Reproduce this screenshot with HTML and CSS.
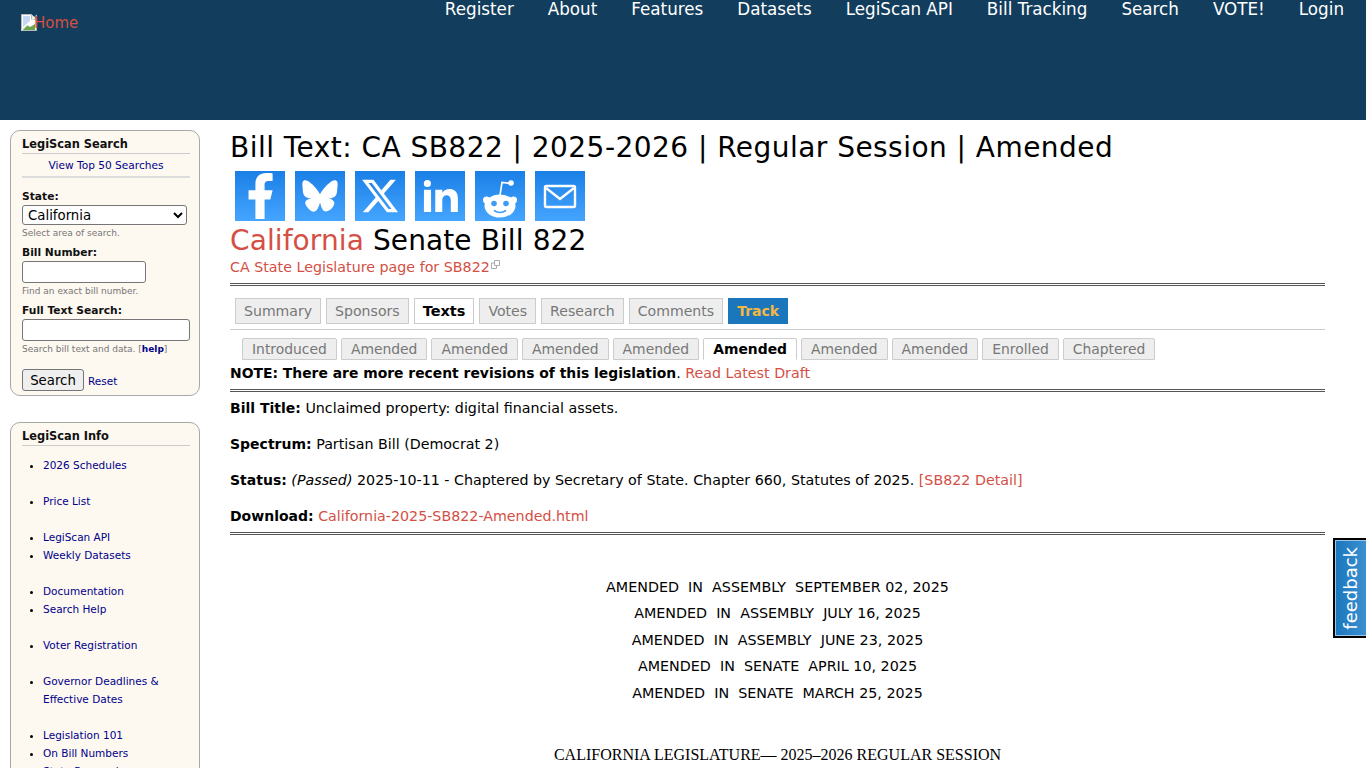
FILE: index.html
```html
<!DOCTYPE html>
<html lang="en">
<head>
<meta charset="utf-8">
<title>Bill Text: CA SB822</title>
<link rel="stylesheet" href="styles.css">
</head>
<body>
<header class="site-header">
  <a class="logo" href="#">
    <svg class="broken" width="16" height="17" viewBox="0 0 16 17"><path d="M.5.5h10l5 5v11H.5z" fill="#fff" stroke="#b8b8b8"/><path d="M10.5.5v5h5" fill="#e8e8e8" stroke="#b8b8b8"/><path d="M2 2h7v5L2 13z" fill="#c4d8f4"/><path d="M1 16l5-5 3 2 5-3v6z" fill="#6aa84f"/><path d="M0 17L16 1" stroke="#fff" stroke-width="1.5" opacity=".6"/></svg><span class="logo-alt">Home</span></a>
  <nav class="main-nav">
    <a href="#">Register</a><a href="#">About</a><a href="#">Features</a><a href="#">Datasets</a><a href="#">LegiScan API</a><a href="#">Bill Tracking</a><a href="#">Search</a><a href="#">VOTE!</a><a href="#">Login</a>
  </nav>
</header>
<div class="page">
  <aside class="sidebar">
    <section class="box search-box">
      <h3 class="box-title">LegiScan Search</h3>
      <a class="top50" href="#">View Top 50 Searches</a>
      <form class="search-form">
        <label class="field-label">State:</label>
        <select class="state-select"><option>California</option></select>
        <p class="hint">Select area of search.</p>
        <label class="field-label">Bill Number:</label>
        <input class="bill-input" type="text">
        <p class="hint">Find an exact bill number.</p>
        <label class="field-label">Full Text Search:</label>
        <input class="full-input" type="text">
        <p class="hint">Search bill text and data. [<a class="help" href="#">help</a>]</p>
        <div class="actions"><button class="search-btn" type="button">Search</button><a class="reset" href="#">Reset</a></div>
      </form>
    </section>
    <section class="box info-box">
      <h3 class="box-title">LegiScan Info</h3>
      <ul class="info-list">
        <li class="sep"><a href="#">2026 Schedules</a></li>
        <li class="sep"><a href="#">Price List</a></li>
        <li><a href="#">LegiScan API</a></li>
        <li class="sep"><a href="#">Weekly Datasets</a></li>
        <li><a href="#">Documentation</a></li>
        <li class="sep"><a href="#">Search Help</a></li>
        <li class="sep"><a href="#">Voter Registration</a></li>
        <li class="sep"><a href="#">Governor Deadlines &amp; Effective Dates</a></li>
        <li><a href="#">Legislation 101</a></li>
        <li><a href="#">On Bill Numbers</a></li>
        <li><a href="#">State Research</a></li>
      </ul>
    </section>
  </aside>
  <main class="content">
    <h1 class="page-title">Bill Text: CA SB822 | 2025-2026 | Regular Session | Amended</h1>
    <div class="share">
      <a class="share-icon" href="#"><svg viewBox="0 0 24 24"><path d="M14 13.5h2.5l1-4H14v-2c0-1.03 0-2 2-2h1.500V2.140c-.326-.043-1.557-.14-2.857-.14C11.928 2 10 3.657 10 6.700v2.800H7v4h3V22h4v-8.500z" transform="translate(-1.2 -1.2) scale(1.1)"/></svg></a>
      <a class="share-icon" href="#"><svg viewBox="-5 -5 34 34"><path d="M12 10.8c-1.087-2.114-4.046-6.053-6.798-7.995C2.566.944 1.561 1.266.902 1.565.139 1.908 0 3.08 0 3.768c0 .69.378 5.65.624 6.479.815 2.736 3.713 3.66 6.383 3.364.136-.02.275-.039.415-.056-.138.022-.276.04-.415.056-3.912.58-7.387 2.005-2.83 7.078 5.013 5.19 6.87-1.113 7.823-4.308.953 3.195 2.05 9.271 7.733 4.308 4.267-4.308 1.172-6.498-2.74-7.078a8.741 8.741 0 0 1-.415-.056c.14.017.279.036.415.056 2.67.297 5.568-.628 6.383-3.364.246-.828.624-5.79.624-6.479 0-.688-.139-1.861-.902-2.206-.659-.298-1.664-.62-4.3 1.24C16.046 4.748 13.087 8.687 12 10.8Z"/></svg></a>
      <a class="share-icon" href="#"><svg viewBox="-3 -3 30 30"><path d="M18.244 2.25h3.308l-7.227 8.26 8.502 11.24H16.17l-5.214-6.817L4.99 21.75H1.68l7.73-8.835L1.254 2.25H8.08l4.713 6.231zm-1.161 17.52h1.833L7.084 4.126H5.117z"/></svg></a>
      <a class="share-icon" href="#"><svg viewBox="-2 -2 28 28"><path d="M6.94 5a2 2 0 1 1-4-.002 2 2 0 0 1 4 .002zM7 8.48H3V21h4V8.48zm6.32 0H9.34V21h3.94v-6.57c0-3.66 4.77-4 4.77 0V21H22v-7.93c0-6.17-7.06-5.94-8.72-2.91l.04-1.68z"/></svg></a>
      <a class="share-icon" href="#"><svg viewBox="0 0 50 50"><circle cx="11.500" cy="29" r="3.500"/><circle cx="38.500" cy="29" r="3.500"/><ellipse cx="25" cy="35" rx="15.500" ry="11.500"/><path d="M25 24l2-12.500 9 1" fill="none" stroke="#fff" stroke-width="1.6"/><circle cx="36" cy="12" r="2.800"/><circle cx="19" cy="32.500" r="2.800" fill="#3d9cf8"/><circle cx="31" cy="32.500" r="2.800" fill="#3d9cf8"/><path d="M19 39.500q6 4 12 0" fill="none" stroke="#3d9cf8" stroke-width="1.6"/></svg></a>
      <a class="share-icon" href="#"><svg viewBox="0 0 50 50"><rect x="10" y="15" width="30" height="21" rx="1.500" fill="none" stroke="#fff" stroke-width="2.400"/><path d="M11 17l14 11 14-11" fill="none" stroke="#fff" stroke-width="2.400"/></svg></a>
    </div>
    <h2 class="bill-name"><a href="#">California</a> Senate Bill 822</h2>
    <p class="state-link"><a href="#">CA State Legislature page for SB822</a><svg class="ext" width="9" height="9" viewBox="0 0 9 9"><path d="M3.500.5h5v5h-5zM3.500 3H.5v5.500h5V5.500" fill="none" stroke="#aaa"/></svg></p>
    <hr class="rule">
    <nav class="tabs">
      <a class="tab" href="#">Summary</a><a class="tab" href="#">Sponsors</a><a class="tab active" href="#">Texts</a><a class="tab" href="#">Votes</a><a class="tab" href="#">Research</a><a class="tab" href="#">Comments</a><a class="tab track" href="#">Track</a>
    </nav>
    <nav class="subtabs">
      <a class="subtab" href="#">Introduced</a><a class="subtab" href="#">Amended</a><a class="subtab" href="#">Amended</a><a class="subtab" href="#">Amended</a><a class="subtab" href="#">Amended</a><a class="subtab active" href="#">Amended</a><a class="subtab" href="#">Amended</a><a class="subtab" href="#">Amended</a><a class="subtab" href="#">Enrolled</a><a class="subtab" href="#">Chaptered</a>
    </nav>
    <p class="note"><b>NOTE: There are more recent revisions of this legislation</b>. <a href="#">Read Latest Draft</a></p>
    <hr class="rule note-rule">
    <p class="meta"><b>Bill Title:</b> Unclaimed property: digital financial assets.</p>
    <p class="meta"><b>Spectrum:</b> Partisan Bill (Democrat 2)</p>
    <p class="meta"><b>Status:</b> <i>(Passed)</i> 2025-10-11 - Chaptered by Secretary of State. Chapter 660, Statutes of 2025. <a href="#">[SB822 Detail]</a></p>
    <p class="meta"><b>Download:</b> <a href="#">California-2025-SB822-Amended.html</a></p>
    <hr class="rule meta-rule">
    <div class="bill-text">
      <p class="amend">AMENDED&nbsp; IN&nbsp; ASSEMBLY&nbsp; SEPTEMBER 02, 2025</p>
      <p class="amend">AMENDED&nbsp; IN&nbsp; ASSEMBLY&nbsp; JULY 16, 2025</p>
      <p class="amend">AMENDED&nbsp; IN&nbsp; ASSEMBLY&nbsp; JUNE 23, 2025</p>
      <p class="amend">AMENDED&nbsp; IN&nbsp; SENATE&nbsp; APRIL 10, 2025</p>
      <p class="amend">AMENDED&nbsp; IN&nbsp; SENATE&nbsp; MARCH 25, 2025</p>
      <p class="session">CALIFORNIA LEGISLATURE— 2025–2026 REGULAR SESSION</p>
    </div>
  </main>
</div>
<a class="feedback" href="#"><span>feedback</span></a>
</body>
</html>
```
FILE: styles.css
```css
html, body { margin: 0; padding: 0; height: 768px; overflow: hidden; background: #fff; }
body { font-family: "DejaVu Sans", sans-serif; font-size: 14.25px; color: #000; }
a { color: #d44f44; text-decoration: none; }

.site-header { height: 120px; background: #123d5c; display: flex; justify-content: space-between; align-items: flex-start; }
.logo { display: flex; align-items: flex-start; margin: 14px 0 0 21px; font-size: 15px; line-height: 17px; }
.logo-alt { margin: 1px 0 0 -3px; }
.main-nav { display: flex; gap: 34px; padding-right: 22px; }
.main-nav a { color: #fff; font-size: 16.75px; line-height: 19px; }

.page { display: flex; align-items: flex-start; padding: 10px 41px 0 10px; }
.sidebar { width: 190px; flex: none; margin-right: 30px; font-size: 10.5px; }
.box { background: #fdf8f0; border: 1px solid #a8a8a8; border-radius: 10px; padding: 6px 9px 0 11px; }
.box-title { margin: 0; font-size: 11.4px; line-height: 15px; padding-bottom: 1px; border-bottom: 1px solid #ccc; font-weight: 700; color: #111; }
.box a { color: #00008b; }
.search-box { height: 258px; }
.top50 { display: block; text-align: center; font-size: 10.6px; line-height: 22px; border-bottom: 2px solid #ddd; }
.search-form { margin-top: 12px; }
.field-label { display: block; font-weight: 700; font-size: 10.7px; line-height: 14px; color: #111; }
.state-select { display: block; width: 165px; height: 20px; font: 13.3px "DejaVu Sans", sans-serif; background: #fff; border: 1px solid #767676; border-radius: 3px; margin: 1px 0 0; padding: 0 0 0 1px; }
.hint { margin: 2px 0 6px; font-size: 9px; line-height: 13px; color: #777; }
.bill-input, .full-input { display: block; height: 22px; box-sizing: border-box; border: 1px solid #767676; border-radius: 3px; background: #fff; margin: 1px 0 0; padding: 0; }
.bill-input { width: 124px; }
.full-input { width: 168px; }
.help { font-weight: 700; }
.actions { display: flex; align-items: center; margin-top: 13px; }
.search-btn { width: 62px; height: 22px; padding: 0; font: 13.3px "DejaVu Sans", sans-serif; background: #efefef; border: 1px solid #767676; border-radius: 3px; color: #000; }
.reset { margin: 2px 0 0 4px; }

.info-box { margin-top: 26px; height: 400px; }
.info-list { margin: 0; padding: 10px 0 0 21px; list-style: disc; line-height: 18px; }
.info-list .sep { margin-bottom: 18px; }

.content { flex: 1; min-width: 0; }
.page-title { margin: 1px 0 0; font-size: 28px; line-height: 34px; font-weight: 400; letter-spacing: .46px; }
.share { display: flex; gap: 10px; padding: 6px 0 0 5px; }
.share-icon { display: block; width: 50px; height: 50px; background: linear-gradient(#1a7fe6, #45a5ff); }
.share-icon svg { display: block; width: 50px; height: 50px; fill: #fff; }
.bill-name { margin: 2px 0 0; font-size: 28px; line-height: 36px; font-weight: 400; letter-spacing: .1px; }
.state-link { margin: -1px 0 0; line-height: 18px; }
.ext { margin-left: 1px; vertical-align: 3px; }
.rule { height: 0; margin: 0; border: 0; border-top: 3px double #555; }
.state-link + .rule { margin-top: 7px; }
.tabs { display: flex; gap: 5px; padding: 12px 0 5px 5px; border-bottom: 1px solid #ccc; height: 26px; font-size: 14.1px; }
.tab { display: block; height: 26px; box-sizing: border-box; line-height: 24px; padding: 0 8px; background: #eee; border: 1px solid #ccc; color: #777; }
.tab.active { background: #fff; color: #000; font-weight: 700; font-size: 14.5px; }
.tab.track { background: #1b76bc; border-color: #1b76bc; color: #f5b642; font-weight: 700; font-size: 14px; }
.subtabs { display: flex; gap: 4px; padding: 8px 0 0 12px; height: 22px; font-size: 13.9px; }
.subtab { display: block; height: 22px; box-sizing: border-box; line-height: 20px; padding: 0 9px; background: #eee; border: 1px solid #ccc; border-radius: 2px 2px 0 0; color: #777; }
.subtab.active { background: #fff; color: #000; font-weight: 700; border-bottom-color: #fff; }
.note { margin: 4px 0 0; line-height: 18px; }
.note b { font-size: 13.9px; }
.note-rule { margin-top: 7px; }
.meta { margin: 0 0 18px; line-height: 18px; }
.meta b { font-size: 14px; }
.note-rule + .meta { margin-top: 7px; }
.meta-rule { margin-top: -11px; }
.bill-text { text-align: center; padding-top: 38.7px; font-size: 14.3px; }
.amend { margin: 0; line-height: 26.500px; }
.session { margin: 39px 0 0; font: 16px/20px "Liberation Serif", serif; }

.feedback { position: fixed; right: 0; top: 538px; width: 31px; height: 96px; border: 2px solid #000; border-right: 0; box-shadow: inset 1px 1px 0 #9cc6e8, inset 0 -1px 0 #9cc6e8; background: linear-gradient(90deg, #1b76bc, #3b90d0); display: flex; align-items: center; justify-content: center; }
.feedback span { writing-mode: vertical-rl; transform: rotate(180deg); color: #fff; font-size: 18px; line-height: 20px; }
```
